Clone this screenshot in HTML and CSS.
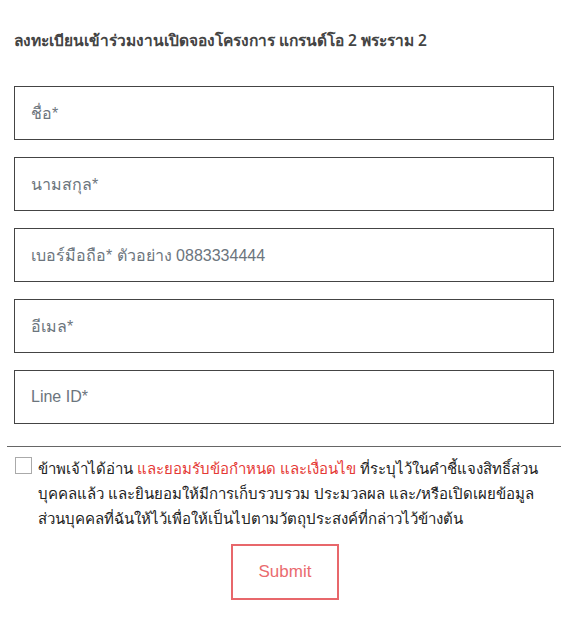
FILE: index.html
```html
<!DOCTYPE html>
<html lang="th">
<head>
<meta charset="utf-8">
<link rel="stylesheet" href="styles.css">
</head>
<body>
<div class="page">
  <h1 class="title">ลงทะเบียนเข้าร่วมงานเปิดจองโครงการ แกรนด์โอ 2 พระราม 2</h1>
  <form class="form">
    <div class="field">ชื่อ*</div>
    <div class="field">นามสกุล*</div>
    <div class="field">เบอร์มือถือ* ตัวอย่าง 0883334444</div>
    <div class="field">อีเมล*</div>
    <div class="field">Line ID*</div>
  </form>
  <hr class="rule">
  <div class="consent">
    <span class="box"></span>
    <p class="consent-text">ข้าพเจ้าได้อ่าน <span class="red">และยอมรับข้อกำหนด และเงื่อนไข</span> ที่ระบุไว้ในคำชี้แจงสิทธิ์ส่วนบุคคลแล้ว และยินยอมให้มีการเก็บรวบรวม ประมวลผล และ/หรือเปิดเผยข้อมูลส่วนบุคคลที่ฉันให้ไว้เพื่อให้เป็นไปตามวัตถุประสงค์ที่กล่าวไว้ข้างต้น</p>
  </div>
  <div class="actions"><button class="submit" type="button">Submit</button></div>
</div>
</body>
</html>
```
FILE: styles.css
```css
html, body { margin: 0; padding: 0; background: #fff; }
body { font-family: "Noto Sans", "Liberation Sans", sans-serif; color: #333; }
.page { padding: 28px 20px 0 14px; width: 540px; }
.title { margin: 0 0 34px 0; font-size: 15.5px; font-weight: 600; color: #444; line-height: 24px; }
.form { display: flex; flex-direction: column; gap: 17px; }
.field { height: 52px; border: 1px solid #444; display: flex; align-items: center; padding-left: 16px; font-size: 16px; color: #6c757d; font-family: "Liberation Sans", "Noto Sans", sans-serif; }
.rule { margin: 22px -7px 0 -7px; border: 0; border-top: 1px solid #666; }
.consent { display: flex; gap: 6px; padding: 9px 0 0 1px; }
.box { flex: none; width: 15px; height: 15px; border: 1px solid #aaa; margin-top: 1px; }
.consent-text { margin: 0; font-size: 15px; line-height: 25px; color: #222; }
.red { color: #e53935; }
.actions { display: flex; justify-content: center; padding-top: 13px; }
.submit { width: 108px; height: 56px; border: 2px solid #e8676b; background: #fff; color: #ea6b6f; font-size: 17px; font-family: "Liberation Sans", sans-serif; margin-left: 2px; }
```
